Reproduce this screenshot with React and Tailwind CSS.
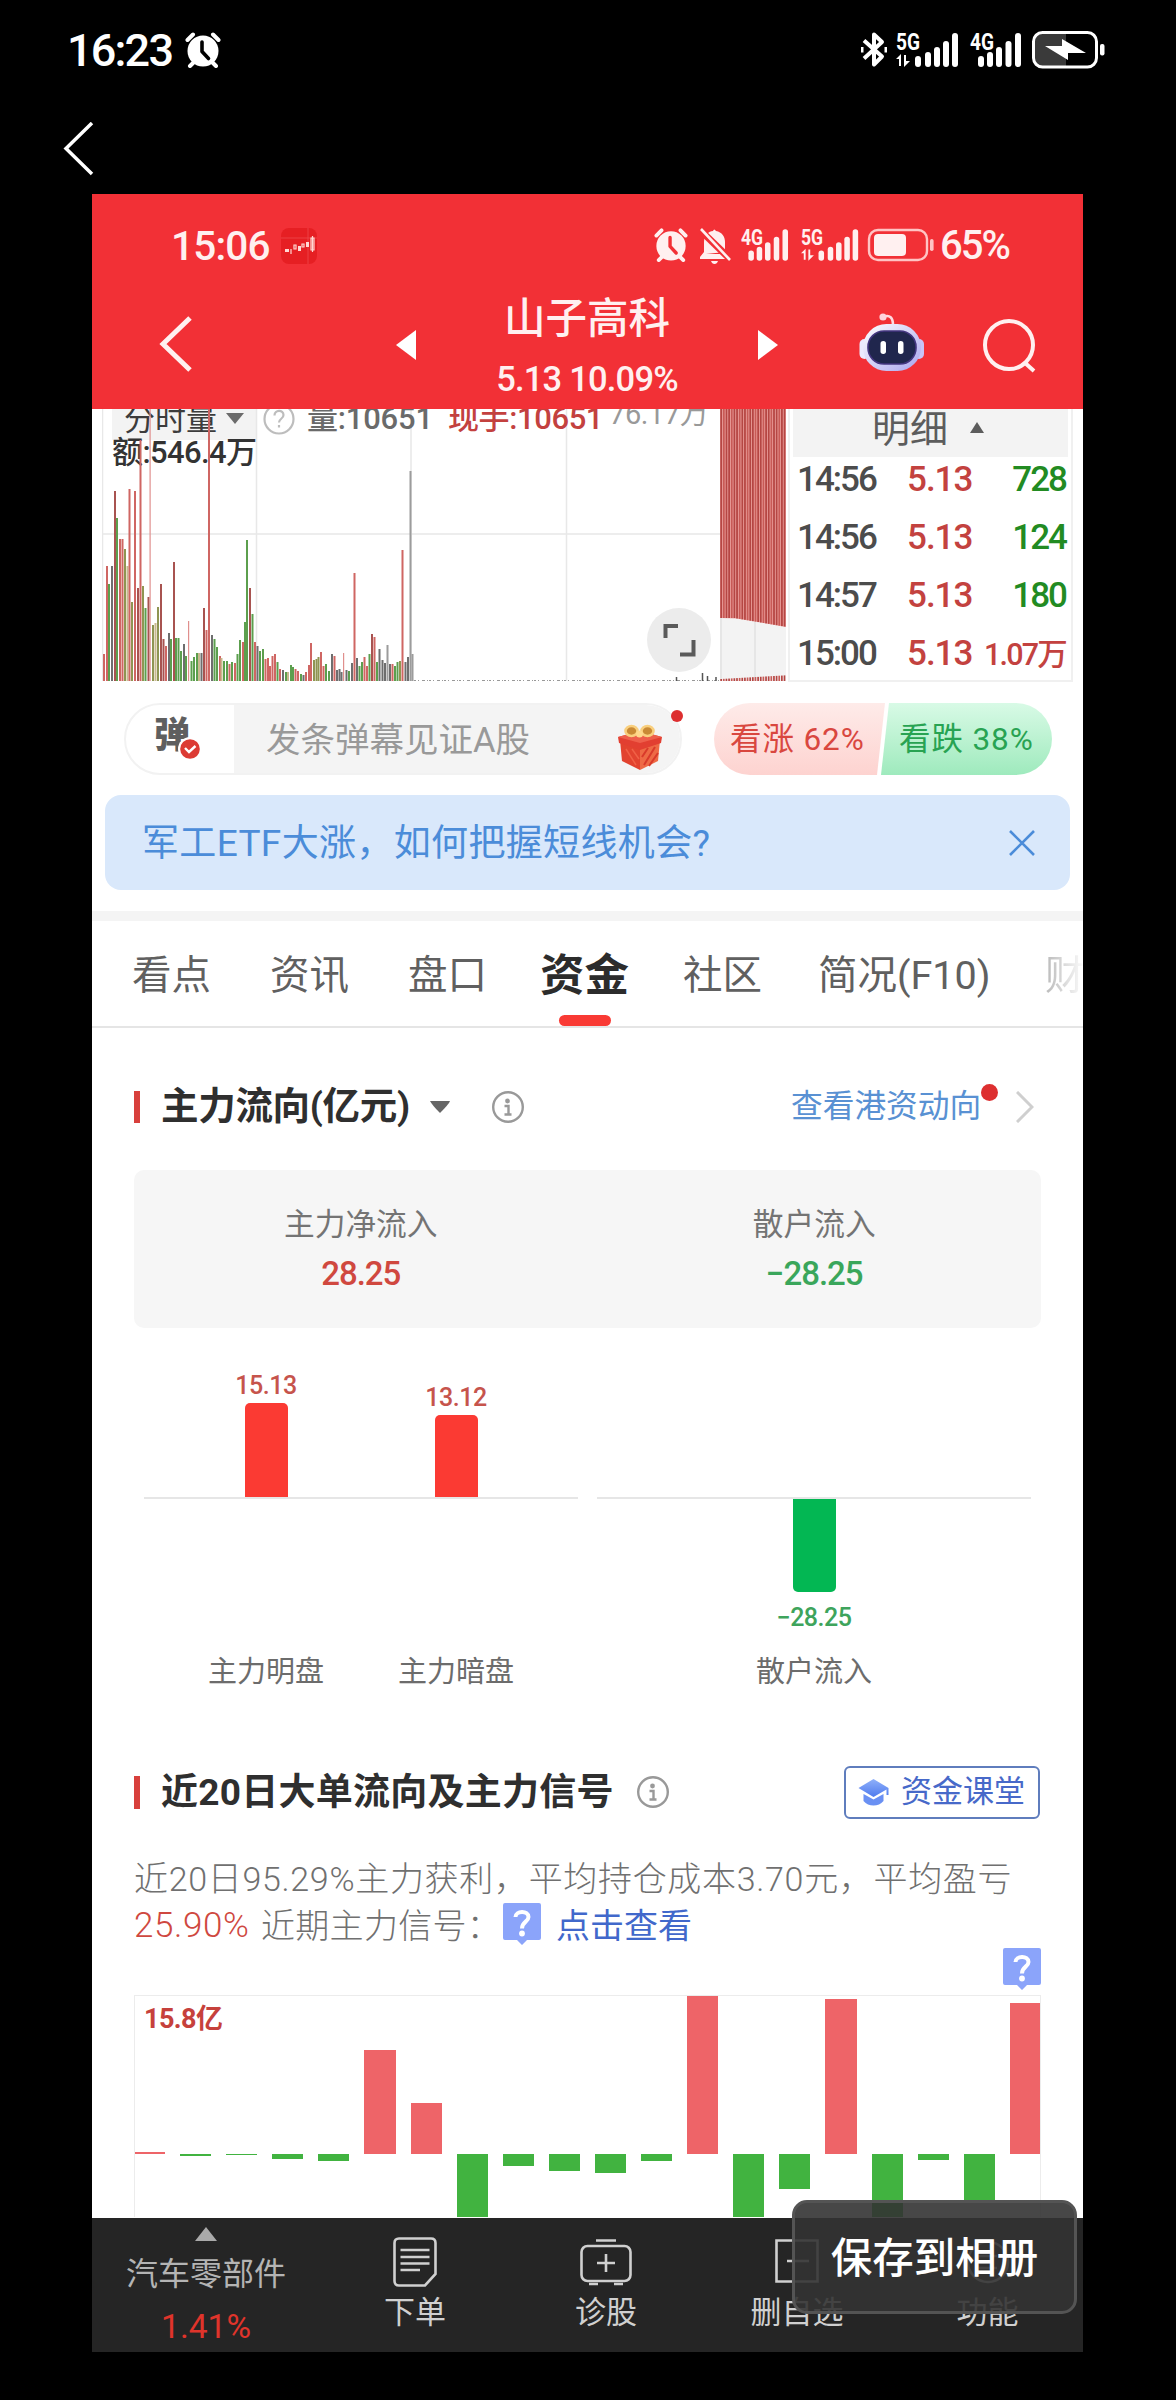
import clsx from 'clsx';

// volume bars of the intraday chart: [x, height, colour key]
const volume = [
  [1, 27, 'r'], [4, 115, 'r'], [6, 97, 'g'], [9, 115, 'd'], [12, 190, 'm'], [14, 163, 'g'], [17, 142, 'r'], [19.5, 142, 'r'],
  [22, 132, 'o'], [24.5, 115, 't'], [26.5, 192, 'r'], [29, 79, 'o'], [32, 190, 'r'], [35, 93, 'm'], [37.5, 241, 'r'], [40, 95, 'o'],
  [42.5, 73, 'g'], [45.5, 84, 'm'], [47.5, 272, 'p'], [50, 56, 'o'], [52.5, 58, 't'], [55, 74, 'o'], [58, 97, 'm'], [60.5, 42, 'm'],
  [63, 35, 'r'], [66, 48, 'd'], [68, 42, 'g'], [71, 119, 'm'], [73, 43, 'g'], [75.5, 43, 'g'], [78, 30, 'g'], [81, 37, 'd'],
  [83, 25, 'g'], [86, 60, 'p'], [88.5, 20, 'g'], [91, 24, 'g'], [94, 28, 'g'], [96, 28, 't'], [98.5, 28, 'd'], [101, 73, 'm'],
  [103.5, 51, 'r'], [106, 272, 'r'], [109, 46, 'd'], [111.5, 42, 'g'], [114, 34, 'g'], [117, 25, 'r'], [118.5, 23, 't'], [121, 20, 'g'],
  [124, 20, 'g'], [126.5, 17, 'r'], [129, 19, 'g'], [132, 18, 'r'], [134.5, 27, 'g'], [137, 41, 'g'], [140, 39, 'r'], [142, 59, 'g'],
  [144, 141, 'g'], [147, 93, 'm'], [149.5, 67, 'g'], [152, 39, 'r'], [154.5, 35, 'd'], [157, 30, 'g'], [160, 32, 'g'], [162.5, 22, 'r'],
  [165, 23, 'r'], [167, 15, 'r'], [169.5, 25, 'r'], [172, 27, 'r'], [174.5, 19, 'g'], [177, 12, 'r'], [180, 11, 'd'], [183, 9, 'g'],
  [185, 9, 't'], [188, 16, 'g'], [190, 14, 'g'], [192.5, 12, 'r'], [195, 10, 'r'], [198, 7, 'g'], [200.5, 6, 'd'], [203, 9, 'r'],
  [206, 16, 'r'], [208, 38, 'r'], [211, 21, 'o'], [213.5, 22, 'o'], [215.5, 24, 'o'], [218, 29, 'r'], [220.5, 15, 'r'], [223, 17, 'g'],
  [226, 10, 'g'], [229, 27, 'd'], [231.5, 25, 'r'], [234, 11, 'd'], [236.5, 12, 'd'], [238.5, 9, 'd'], [241, 28, 'p'], [243.5, 11, 'd'],
  [246, 10, 'g'], [249, 18, 'd'], [251.5, 108, 'r'], [254, 23, 'd'], [256.5, 15, 'g'], [259, 19, 'g'], [261.5, 24, 'r'], [264, 15, 'r'],
  [266.5, 27, 'g'], [269, 47, 'm'], [271.5, 44, 'r'], [274, 19, 'g'], [276.5, 32, 'd'], [279.5, 21, 'd'], [282, 18, 'd'], [284.5, 36, 'y'],
  [287, 17, 'd'], [289.5, 17, 'r'], [292, 15, 'g'], [294.5, 19, 'g'], [297, 20, 'o'], [299.5, 131, 'r'], [302.5, 19, 'd'], [305, 24, 'd'],
  [307.5, 210, 'y'], [309.5, 27, 'y'],
];

const volumeColors = {
  r: '#cf6663', m: '#a85350', p: '#e08f8d', g: '#5c9f4e', o: '#8f9552', t: '#c9b98f', d: '#6e6e6e', y: '#9c9c9c',
};

const trades = [
  { time: '14:56', price: '5.13', amount: '728', up: false },
  { time: '14:56', price: '5.13', amount: '124', up: false },
  { time: '14:57', price: '5.13', amount: '180', up: false },
  { time: '15:00', price: '5.13', amount: '1.07万', up: true },
];

const flow20 = [2, -2, -1, -5, -7, 104, 51, -100, -12, -17, -19, -7, 158, -100, -35, 155.5, -100, -6, -46, 151];

function Signal({ label, className, arrows }) {
  return (
    <svg viewBox="0 0 64 36" className={clsx('overflow-visible', className)} fill="currentColor">
      <text x="0" y="18" fontSize="23" fontWeight="700" fontFamily="Roboto, sans-serif" textLength="24" lengthAdjust="spacingAndGlyphs">{label}</text>
      {arrows ? (
        <g>
          <path d="M0 27 L5 22 V34 H3 V27 Z M8 23 H10 V29 H14 L8 35 Z" />
          <rect x="19" y="24" width="6" height="11" rx="3" />
        </g>
      ) : (
        <rect x="8" y="24" width="6" height="11" rx="3" />
      )}
      {(arrows ? [29, 38, 47, 56] : [17, 26, 35.5, 45]).map((x, i) => (
        <rect key={x} x={x} y={[20, 15, 9, 1][i]} width="6" height={[15, 20, 26, 34][i]} rx="3" />
      ))}
    </svg>
  );
}

function AlarmIcon({ className, cut }) {
  return (
    <svg viewBox="0 0 36 36" className={className} fill="none" strokeLinecap="round">
      <circle cx="18" cy="19" r="15.5" fill="currentColor" />
      <path d="M2.5 8 L8 2.5 M33.5 8 L28 2.5 M5 34 L9 30 M31 34 L27 30" stroke="currentColor" strokeWidth="4" />
      <path d="M17 10 V19.5 L23.5 26.5" stroke={cut} strokeWidth="3.6" strokeLinejoin="round" />
    </svg>
  );
}

function InfoIcon({ className }) {
  return (
    <svg viewBox="0 0 34 34" className={className} fill="none" stroke="#999999" strokeWidth="2.4">
      <circle cx="17" cy="17" r="14.8" />
      <circle cx="16.5" cy="11" r="2.4" fill="#999999" stroke="none" />
      <path d="M13.5 16 H17.5 V24.5 M13.5 24.5 H20.5" />
    </svg>
  );
}

function QuestionBubble({ className }) {
  return (
    <svg viewBox="0 0 38 42" className={className}>
      <path d="M2 0 H36 Q38 0 38 2 V35 Q38 37 36 37 H24 L19 42 L14 37 H2 Q0 37 0 35 V2 Q0 0 2 0 Z" fill="#8ba4fa" />
      <path d="M12.5 14 C12.5 7.5 25.5 7 25.5 14 C25.5 19 19 18.5 19 25.5" fill="none" stroke="#fff" strokeWidth="4" />
      <circle cx="19" cy="30.5" r="2.9" fill="#fff" />
    </svg>
  );
}

function PhoneStatus() {
  return (
    <div className="flex h-[98px] items-start pl-[67px] text-white">
      <span className="mt-[26px] h-[50px] w-[118px] text-[45px] leading-[50px] font-medium tracking-[-1.8px]">16:23</span>
      <AlarmIcon className="mt-[32px] h-[36px] w-[36px]" cut="#000" />
      <svg viewBox="0 0 26 36" className="mt-[31px] ml-[640px] h-[37px] w-[26px]" fill="none" stroke="currentColor" strokeWidth="4" strokeLinejoin="round">
        <path d="M3 9 L21 25 L13 33 V3 L21 10.5 L3 27" />
        <path d="M1 15.5 V21 M25 15.5 V21" strokeWidth="3" />
      </svg>
      <Signal label="5G" arrows className="mt-[32px] ml-[9px] h-[36px] w-[64px]" />
      <Signal label="4G" className="mt-[32px] ml-[10px] h-[36px] w-[64px]" />
      <svg viewBox="0 0 74 38" className="mt-[31px] -ml-[2px] h-[38px] w-[74px]" fill="none">
        <path d="M34 2 H10 Q2 2 2 10 V28 Q2 36 10 36 H34 Z" fill="#3a3a3a" />
        <rect x="1.5" y="1.5" width="63" height="34.5" rx="9" stroke="#fff" strokeWidth="3" />
        <rect x="68" y="13" width="4.5" height="11.5" rx="2" fill="#fff" />
        <path d="M30 8 V15 H13 L36 29 V22 H54 Z" fill="#fff" />
      </svg>
    </div>
  );
}

function Robot() {
  return (
    <svg viewBox="0 0 66 60" className="h-[60px] w-[66px]">
      <defs>
        <linearGradient id="shell" x1="0" y1="0" x2="1" y2="1">
          <stop offset="0" stopColor="#ffffff" />
          <stop offset="1" stopColor="#a9a4ee" />
        </linearGradient>
      </defs>
      <path d="M24 5 C31 2 34 6 34 13" fill="none" stroke="#ffd9e0" strokeWidth="2.6" />
      <circle cx="24" cy="5" r="3.6" fill="#ffd3dc" />
      <rect x="0.5" y="27" width="10" height="20" rx="5" fill="#ece9fd" />
      <rect x="55" y="27" width="10" height="20" rx="5" fill="#c9c4f6" />
      <rect x="4" y="12" width="58" height="47" rx="23.5" fill="url(#shell)" />
      <rect x="9" y="19" width="48" height="33" rx="16" fill="#20264d" stroke="#43357f" strokeWidth="1.6" />
      <rect x="21.5" y="29" width="5.500" height="13" rx="2.700" fill="#fff" />
      <rect x="39" y="29" width="5.500" height="13" rx="2.700" fill="#fff" />
    </svg>
  );
}

function Header() {
  return (
    <header className="h-[215px] bg-[#f23036] text-[#fff0f0]">
      <div className="flex h-[90px] items-start pl-[79px]">
        <span className="mt-[29px] h-[46px] w-[110px] text-[40.5px] leading-[46px] font-medium tracking-[-0.8px]">15:06</span>
        <svg viewBox="0 0 36 36" className="mt-[34px] h-[36px] w-[36px]">
          <rect width="36" height="36" rx="8" fill="#e61f23" />
          <path d="M0 10 H36 M27 0 V36" stroke="#ee4a4c" strokeWidth="0.8" />
          <path d="M4 24 H8 V21 H4 Z M17 18 H20 V23 H17 Z M25 14 H28 V19 H25 Z" fill="#ffd9d4" />
          <path d="M10 21 V26 M13 17 H15 V21 H13 Z M21 16 H23 V19 H21 Z M30 10 H33 V22 H30 Z M31.500 8 V24" fill="none" stroke="#ffd9d4" strokeWidth="1.2" />
        </svg>
        <AlarmIcon className="mt-[34px] ml-[337px] h-[34px] w-[34px]" cut="#f23036" />
        <svg viewBox="0 0 32 36" className="mt-[34px] ml-[11px] h-[36px] w-[32px]" fill="currentColor">
          <path d="M7 26 H25 L28 31 H1 V29 L5 24 V14 C5 7 10 3 14 3 Q15 0 17 3 C23 4 26 9 26 14 V24 Z" />
          <path d="M12 33 H19 Q18 36 15.500 36 Q13 36 12 33 Z" />
          <path d="M0 1 L31 31" stroke="#f23036" strokeWidth="7" />
          <path d="M2 1 L31 32" stroke="currentColor" strokeWidth="2.6" />
        </svg>
        <Signal label="4G" className="mt-[34px] ml-[10px] h-[34px] w-[59px]" />
        <Signal label="5G" arrows className="mt-[34px] ml-px h-[34px] w-[59px]" />
        <svg viewBox="0 0 68 34" className="mt-[34px] ml-[7px] h-[34px] w-[68px]" fill="none">
          <rect x="2" y="2" width="58" height="30" rx="9" stroke="#ffc4c4" strokeWidth="2.4" />
          <rect x="7" y="6" width="32" height="22" rx="4" fill="#fff0f0" />
          <rect x="63" y="11" width="3.600" height="12" rx="1.800" fill="#ffc4c4" />
        </svg>
        <span className="mt-[29px] ml-[5px] text-[40px] leading-[46px] font-medium tracking-[-2px]">65%</span>
      </div>
      <div className="flex h-[125px] items-start pl-[67px]">
        <svg viewBox="0 0 34 58" className="mt-[31px] h-[58px] w-[34px]" fill="none" stroke="currentColor" strokeWidth="5">
          <path d="M31 3 L4 29 L31 55" />
        </svg>
        <svg viewBox="0 0 20 30" className="mt-[46px] ml-[203px] h-[30px] w-[20px]" fill="#fff">
          <path d="M20 0 V30 L0 15 Z" />
        </svg>
        <div className="flex w-[342px] flex-col items-center">
          <h1 className="mt-[9px] h-[52px] text-[41.5px] leading-[52px] font-medium">山子高科</h1>
          <p className="mt-[14px] h-[40px] text-[34.5px] leading-[40px] font-medium tracking-[-0.8px]">5.13 10.09%</p>
        </div>
        <svg viewBox="0 0 20 30" className="mt-[46px] h-[30px] w-[20px]" fill="#fff">
          <path d="M0 0 V30 L20 15 Z" />
        </svg>
        <div className="mt-[28px] ml-[81px]"><Robot /></div>
        <svg viewBox="0 0 56 56" className="mt-[33px] ml-[57px] h-[56px] w-[56px]" fill="none" stroke="currentColor" strokeWidth="4">
          <circle cx="27" cy="28" r="24" />
          <path d="M42 45 L52 54" />
        </svg>
      </div>
    </header>
  );
}

function Intraday() {
  return (
    <section className="relative h-[273px] overflow-hidden">
      <div className="absolute top-0 left-[20px] h-[31px] w-[144px] bg-[#f3f3f3]" />
      <svg viewBox="0 0 700 273" className="absolute top-0 left-[10px] h-[273px] w-[700px]">
        <path d="M0.500 0 V272 M154.500 0 V272 M309 0 V272 M464.500 0 V272 M0 125 H620 M686 272 H700" stroke="#e8e8e8" strokeWidth="1.500" fill="none" />
      </svg>
      <div className="absolute top-0 left-0 text-[31px] leading-[40px] whitespace-nowrap">
        <span className="absolute top-[-9px] left-[32px] text-[#3c3c3c]">分时量</span>
        <span className="absolute top-[-10px] left-[215px] font-medium tracking-[-0.2px] text-[#6a6a6a]">量:10651</span>
        <span className="absolute top-[-10px] left-[356px] font-medium tracking-[-0.4px] text-[#c3413f]">现手:10651</span>
        <span className="absolute top-[-15px] left-[517px] text-[29px] tracking-[-0.4px] text-[#999999]">76.17万</span>
        <span className="absolute top-[24px] left-[20px] font-medium tracking-[-0.6px] text-[#333333]">额:546.4万</span>
      </div>
      <svg viewBox="0 0 20 16" className="absolute top-[2px] left-[133px] h-[16px] w-[20px]">
        <path d="M1 2 H19 L10 13 Z" fill="#6b6b6b" />
      </svg>
      <svg viewBox="0 0 34 34" className="absolute top-[-7px] left-[170px] h-[34px] w-[34px]" fill="none" stroke="#bdbdbd" strokeWidth="2.200">
        <circle cx="17" cy="17" r="14.500" />
        <path d="M12.500 13.500 C12.500 7.500 21.500 7.500 21.500 13 C21.500 17 17 16.500 17 20.500 M17 23 V25.500" />
      </svg>
      <svg viewBox="0 0 686 273" className="absolute top-0 left-[10px] h-[273px] w-[686px]">
        {volume.map(([x, h, c]) => (
          <rect key={x} x={x} y={272 - h} width={c === 'p' ? 1.2 : 2} height={h} fill={volumeColors[c]} />
        ))}
        <path d="M312 271.500 H618" stroke="#999" strokeWidth="1.200" strokeDasharray="2 2 1 3 3 2 1 1" />
        <path d="M574.500 272 V268 M600.500 272 V264 M605.500 272 V267 M614 272 V268" stroke="#555" strokeWidth="1.500" />
        <rect x="618" width="66" height="272" fill="#f3f3f3" />
        <path d="M653 205 V272 M619 208 V272" stroke="#e2e2e2" strokeWidth="1.500" />
        <path d="M618 0 H684 V218 L650 212 L634 209.500 L618 209 Z" fill="#eda3a0" />
        {Array.from({ length: 25 }, (_, i) => (
          <g key={i} fill={i % 3 === 1 ? '#c85a56' : '#b54643'}>
            <rect x={618.3 + i * 2.64} y="0" width="1.800" height={209 + Math.max(0, i - 5) * 0.45} />
            <rect x={618.3 + i * 2.64} y={270 - i * 0.15} width="1.700" height={2 + i * 0.15} />
          </g>
        ))}
      </svg>
      <svg viewBox="0 0 64 64" className="absolute top-[199px] left-[555px] h-[64px] w-[64px]" fill="none" stroke="#5a5a5a" strokeWidth="4">
        <circle cx="32" cy="32" r="32" fill="#ececec" stroke="none" />
        <path d="M18.500 30 V18 H31 M46.500 32 V46.500 H33" />
      </svg>
      <div className="absolute top-0 left-[696px] h-[273px] w-[285px] border-r-2 border-b-2 border-l-2 border-[#f0f0f0] bg-white">
        <div className="ml-[3px] flex h-[48px] w-[275px] items-start bg-[#f3f3f3] pl-[79px] text-[#5c5c5c]">
          <span className="mt-[-2px] text-[38px] leading-[44px]">明细</span>
          <svg viewBox="0 0 14 11" className="mt-[13px] ml-[22px] h-[11px] w-[14px]" fill="currentColor">
            <path d="M0 11 L7 0 L14 11 Z" />
          </svg>
        </div>
        {trades.map((t, i) => (
          <div key={i} className="flex h-[58px] items-start pt-[1.500px] pr-[5px] pl-[7px] text-[35px] leading-[42px] font-medium">
            <span className="w-[110px] tracking-[-2px] text-[#4c4c4c]">{t.time}</span>
            <span className="w-[70px] tracking-[-1px] text-[#c3423f]">{t.price}</span>
            <span
              className={clsx(
                'flex-1 text-right whitespace-nowrap',
                t.up ? 'text-[30.500px] leading-[44px] tracking-[-1.800px] text-[#c3423f]' : 'tracking-[-2px] text-[#228b22]'
              )}
            >
              {t.amount}
            </span>
          </div>
        ))}
      </div>
    </section>
  );
}

function DanmakuBar() {
  return (
    <div className="relative mt-[21px] flex h-[72px] pl-[32px]">
      <div className="flex w-[558px] overflow-hidden rounded-full border-2 border-[#f2f2f2]">
        <div className="flex w-[108px] items-start pl-[28px] text-[36px] leading-[52px] font-black text-[#5f5f5f]">
          <span className="mt-[5px] h-[52px]">弹</span>
        </div>
        <div className="flex flex-1 items-center bg-[#f4f4f4] pt-[3px] pl-[32px] text-[34.5px] leading-none text-[#999999]">发条弹幕见证A股</div>
      </div>
      <svg viewBox="0 0 26 26" className="absolute top-[33px] left-[85px] h-[26px] w-[26px]">
        <circle cx="13" cy="13" r="12" fill="#fff" />
        <circle cx="13" cy="13" r="9.800" fill="#dc3b34" />
        <path d="M8 12 L12 16 L18.500 10" fill="none" stroke="#fff" strokeWidth="2.400" />
      </svg>
      <svg viewBox="0 0 44 48" className="absolute top-[20px] left-[526px] h-[48px] w-[44px]">
        <path d="M2 17 L22 24 V47 L4 38 Z" fill="#e2432f" />
        <path d="M42 17 L22 24 V47 L40 38 Z" fill="#ee6a45" />
        <path d="M26 42 L37 24 M24 34 L30 25 M31 43 L40 30" stroke="#d93a2a" strokeWidth="2" />
        <path d="M8 26 L18 42 M14 26 L21 36" stroke="#f06046" strokeWidth="1.500" />
        <path d="M0 14 L22 8 L44 14 L43 20 L22 27 L1 20 Z" fill="#e23f31" />
        <path d="M0 14 L22 8 L44 14 L22 20 Z" fill="#ee5f4b" />
        <ellipse cx="13.500" cy="8" rx="6" ry="5" fill="#c98a35" stroke="#f9cf7d" strokeWidth="2.600" />
        <ellipse cx="29.500" cy="8" rx="6" ry="5" fill="#c98a35" stroke="#f9cf7d" strokeWidth="2.600" />
        <circle cx="21.500" cy="11" r="3.500" fill="#ffd98c" />
      </svg>
      <span className="absolute top-[7px] left-[579px] h-[12px] w-[12px] rounded-full bg-[#dd2f30]" />
      <div className="ml-[32px] flex h-[72px] w-[338px] overflow-hidden rounded-full text-[31.500px] leading-none tracking-[0.900px] whitespace-nowrap">
        <div className="flex w-[171px] items-center bg-linear-to-b from-[#feebe9] to-[#fdd3d0] pt-px pl-[16px] text-[#d9473f] [clip-path:polygon(0_0,100%_0,163px_100%,0_100%)]">
          看涨 62%
        </div>
        <div className="-ml-[4px] flex w-[171px] items-center bg-linear-to-b from-[#d8fae6] to-[#9eeabd] pt-px pl-[18px] text-[#28a352] [clip-path:polygon(8px_0,100%_0,100%_100%,0_100%)]">
          看跌 38%
        </div>
      </div>
    </div>
  );
}

const tabs = [
  { label: '看点', pos: 'ml-[40px] w-[138px]' },
  { label: '资讯', pos: 'w-[138px]' },
  { label: '盘口', pos: 'w-[131px]' },
  { label: '资金', pos: 'w-[144px]', active: true },
  { label: '社区', pos: 'w-[135px]' },
  { label: '简况(F10)', pos: 'w-[227px]' },
];

function Tabs() {
  return (
    <nav className="relative flex h-[107px] items-start overflow-hidden border-b-2 border-[#e5e5e5] pt-[29px] text-[39.5px] leading-[52px] whitespace-nowrap text-[#606060]">
      {tabs.map((tab) => (
        <span key={tab.label} className={clsx('shrink-0', tab.pos, tab.active && 'pl-px text-[44.5px] font-bold text-[#2c2c2c]')}>
          {tab.label}
        </span>
      ))}
      <span className="bg-linear-to-r from-[#b9b9b9] to-[#ffffff] bg-clip-text text-transparent">财</span>
      <span className="absolute top-[94px] left-[467px] h-[11px] w-[52px] rounded-full bg-[#f93a34]" />
    </nav>
  );
}

function MainFlow() {
  return (
    <section className="h-[676px] px-[42px]">
      <div className="flex h-[142px] items-center pt-[16px] leading-none">
        <span className="mr-[21px] h-[32px] w-[6px] bg-[#d8403c]" />
        <h2 className="w-[269px] text-[37.5px] font-bold tracking-[-0.3px]">
          <span className="text-[#2f2f2f]">主力流向(亿元)</span>
        </h2>
        <svg viewBox="0 0 20 12" className="h-[12px] w-[20px]" fill="#666">
          <path d="M0 0 H20 Q19 3 10 12 Q2 4 0 0 Z" />
        </svg>
        <InfoIcon className="ml-[41px] h-[34px] w-[34px]" />
        <span className="ml-[266px] text-[31.7px] text-[#5991d3]">查看港资动向</span>
        <span className="-mt-[30px] h-[17px] w-[17px] rounded-full bg-[#dd2f30]" />
        <svg viewBox="0 0 18 32" className="ml-[18px] h-[32px] w-[18px]" fill="none" stroke="#cfcfcf" strokeWidth="3">
          <path d="M1 1 L16 16 L1 31" />
        </svg>
      </div>
      <div className="grid h-[158px] grid-cols-2 rounded-[10px] bg-[#f6f6f6] pt-[35px] text-center">
        <div>
          <p className="h-[40px] text-[30.7px] leading-[40px] text-[#747474]">主力净流入</p>
          <p className="mt-[9px] h-[40px] text-[33px] leading-[40px] font-medium tracking-[-1px] text-[#d0483f]">28.25</p>
        </div>
        <div>
          <p className="h-[40px] text-[30.7px] leading-[40px] text-[#747474]">散户流入</p>
          <p className="mt-[9px] h-[40px] text-[33px] leading-[40px] font-medium tracking-[-1px] text-[#3aa65b]">−28.25</p>
        </div>
      </div>
      <div className="flex justify-between px-[10px] text-[25px] leading-[30px] font-medium tracking-[-0.5px]">
        <div className="flex h-[171px] w-[434px] border-b-2 border-[#e6e6e6] pl-[58px]">
          <div className="flex w-[128px] flex-col items-center justify-end">
            <span className="mb-[2px] text-[#c6544c]">15.13</span>
            <div className="h-[94px] w-[43px] rounded-t-[5px] bg-[#fb3a33]" />
          </div>
          <div className="ml-[62px] flex w-[128px] flex-col items-center justify-end">
            <span className="mb-[2px] text-[#c6544c]">13.12</span>
            <div className="h-[82px] w-[43px] rounded-t-[5px] bg-[#fb3a33]" />
          </div>
        </div>
        <div className="mt-[169px] flex h-[136px] w-[434px] flex-col items-center border-t-2 border-[#e6e6e6]">
          <div className="h-[94px] w-[43px] rounded-b-[5px] bg-[#03b753]" />
          <span className="mt-[11px] text-[#3ea45c]">−28.25</span>
        </div>
      </div>
      <div className="mt-[21px] flex h-[36px] pl-[68px] text-[29px] leading-[36px] text-[#6c6c6c]">
        <span className="w-[128px] text-center">主力明盘</span>
        <span className="ml-[62px] w-[128px] text-center">主力暗盘</span>
        <span className="ml-[230px] w-[128px] text-center">散户流入</span>
      </div>
    </section>
  );
}

function TwentyDays() {
  return (
    <section className="px-[42px]">
      <div className="flex h-[176px] items-center leading-none">
        <span className="mr-[21px] h-[33px] w-[6px] bg-[#d8403c]" />
        <h2 className="w-[475px] text-[37px] font-bold tracking-[0.25px] whitespace-nowrap text-[#2f2f2f]">近20日大单流向及主力信号</h2>
        <InfoIcon className="h-[34px] w-[34px]" />
        <button className="ml-[174px] flex h-[53px] w-[196px] items-center rounded-[6px] border-2 border-[#5f7dbd] pl-[12px] text-[31px] leading-none text-[#4769c9]">
          <svg viewBox="0 0 30 28" className="mr-[12px] h-[28px] w-[31px]">
            <defs>
              <linearGradient id="cap" x1="0" y1="0" x2="0" y2="1">
                <stop offset="0" stopColor="#8fb0fa" />
                <stop offset="1" stopColor="#4f7bee" />
              </linearGradient>
            </defs>
            <path d="M0 10 L15 1 L30 10 V17 H28 V11.500 L15 19 Z" fill="url(#cap)" />
            <path d="M5 16 L15 21.500 L25 16 V23 Q21 27.500 15 27.500 Q9 27.500 5 23 Z" fill="#6a90f3" />
          </svg>
          <span className="-mt-[2px] whitespace-nowrap">资金课堂</span>
        </button>
      </div>
      <div className="-mt-[24px] text-[34px] leading-[46px] font-light whitespace-nowrap text-[#707070]">
        <p className="h-[47px] tracking-[0.68px]">近20日95.29%主力获利，平均持仓成本3.70元，平均盈亏</p>
        <p className="flex h-[47px]">
          <span className="w-[127px] text-[35px] tracking-[0.6px] text-[#cf4840]">25.90%</span>
          <span className="w-[242px] tracking-[0.3px]">近期主力信号：</span>
          <QuestionBubble className="h-[42px] w-[38px]" />
          <span className="ml-[15px] font-normal text-[#4168cb]">点击查看</span>
        </p>
      </div>
      <div className="relative mt-[45px] h-[222px] overflow-hidden border-x border-t border-[#ececec]">
        <span className="absolute top-[5px] left-[9px] text-[27px] leading-[36px] font-bold tracking-[-0.6px] text-[#c6413c]">15.8亿</span>
        <div className="-mx-px flex gap-[15px]">
          {flow20.map((v, i) => (
            <div key={i} className={clsx('flex w-[31.1px] shrink-0 flex-col', v > 0 ? 'h-[158px] justify-end' : 'pt-[158px]')}>
              <div className={v > 0 ? 'bg-[#ee6468]' : 'bg-[#41b340]'} style={{ height: Math.abs(v) }} />
            </div>
          ))}
        </div>
      </div>
    </section>
  );
}

function BottomBar() {
  return (
    <footer className="flex h-[134px] bg-[#252525] text-[31px] leading-[40px] text-[#d0d0d0]">
      <div className="flex w-[228px] flex-col items-center">
        <svg viewBox="0 0 22 14" className="mt-[9px] h-[14px] w-[22px]" fill="#aaaaaa">
          <path d="M0 14 L11 0 L22 14 Z" />
        </svg>
        <span className="mt-[13px] h-[40px] text-[32px] text-[#b4b4b4]">汽车零部件</span>
        <span className="mt-[13px] h-[40px] text-[33.5px] text-[#e0342b]">1.41%</span>
      </div>
      <div className="flex w-[190px] flex-col items-center">
        <svg viewBox="0 0 44 50" className="mt-[19px] h-[50px] w-[44px]" fill="none" stroke="currentColor" strokeWidth="2.600">
          <path d="M6 1.500 H38 Q42.500 1.500 42.500 6 V37 L32 48.500 H6 Q1.500 48.500 1.500 44 V6 Q1.500 1.500 6 1.500 Z" />
          <path d="M7.500 13 H36.500 M7.500 20 H36.500 M7.500 26.500 H36.500 M7.500 33 H27" />
        </svg>
        <span className="mt-[6px] h-[40px]">下单</span>
      </div>
      <div className="flex w-[192px] flex-col items-center">
        <svg viewBox="0 0 52 48" className="mt-[21px] h-[48px] w-[52px]" fill="none" stroke="currentColor" strokeWidth="2.600">
          <rect x="1.500" y="7" width="49" height="35" rx="6" />
          <path d="M16 1.500 H36 M26 15 V33 M17 24 H35 M9 45 H18 M34 45 H43" />
        </svg>
        <span className="mt-[6px] h-[40px]">诊股</span>
      </div>
      <div className="flex w-[190px] flex-col items-center">
        <svg viewBox="0 0 44 44" className="mt-[21px] h-[44px] w-[44px]" fill="none" stroke="currentColor" strokeWidth="2.600">
          <path d="M1.500 1.500 H42.500 V42.500 H1.500 Z M12 22 H34" />
        </svg>
        <span className="mt-[10px] h-[40px]">删自选</span>
      </div>
      <div className="flex w-[191px] flex-col items-center">
        <svg viewBox="0 0 44 46" className="mt-[21px] h-[46px] w-[44px]" fill="none" stroke="currentColor" strokeWidth="2.600">
          <circle cx="22" cy="23" r="20" />
          <path d="M13 17 H31 M13 29 H31" />
        </svg>
        <span className="mt-[8px] h-[40px]">功能</span>
      </div>
    </footer>
  );
}

export default function App() {
  return (
    <div className="relative h-[2400px] w-[1176px] overflow-hidden bg-black font-['Roboto','Noto_Sans_CJK_SC',sans-serif]">
      <PhoneStatus />
      <div className="h-[96px] pt-[24px] pl-[62px]">
        <svg viewBox="0 0 32 54" className="h-[54px] w-[32px]" fill="none" stroke="#fff" strokeWidth="3.500">
          <path d="M30 1 L4 26.500 L30 52" />
        </svg>
      </div>

      <main className="relative ml-[92px] h-[2158px] w-[991px] overflow-hidden bg-white">
        <Header />
        <Intraday />
        <DanmakuBar />
        <div className="mx-[13px] mt-[20px] flex h-[95px] items-center justify-between rounded-[16px] bg-[#d9e8fb] pr-[35px] pl-[37px] text-[#4b8cd9]">
          <span className="mt-[2px] text-[37px] leading-none tracking-[0.35px]">军工ETF大涨，如何把握短线机会?</span>
          <svg viewBox="0 0 26 26" className="h-[26px] w-[26px]" fill="none" stroke="currentColor" strokeWidth="2.600">
            <path d="M1 1 L25 25 M25 1 L1 25" />
          </svg>
        </div>
        <div className="mt-[21px] h-[10px] bg-[#f4f4f4]" />
        <Tabs />
        <MainFlow />
        <TwentyDays />
        <QuestionBubble className="absolute top-[1754px] left-[911px] h-[42px] w-[38px]" />
        <div className="absolute bottom-0 left-0 w-full">
          <BottomBar />
        </div>
      </main>

      <button className="absolute top-[2200px] left-[792px] h-[114px] w-[285px] rounded-[15px] border-[3px] border-[#545454] bg-[#333333]/90 pt-[3px] text-[41.5px] leading-[50px] font-medium text-white">
        保存到相册
      </button>
    </div>
  );
}
